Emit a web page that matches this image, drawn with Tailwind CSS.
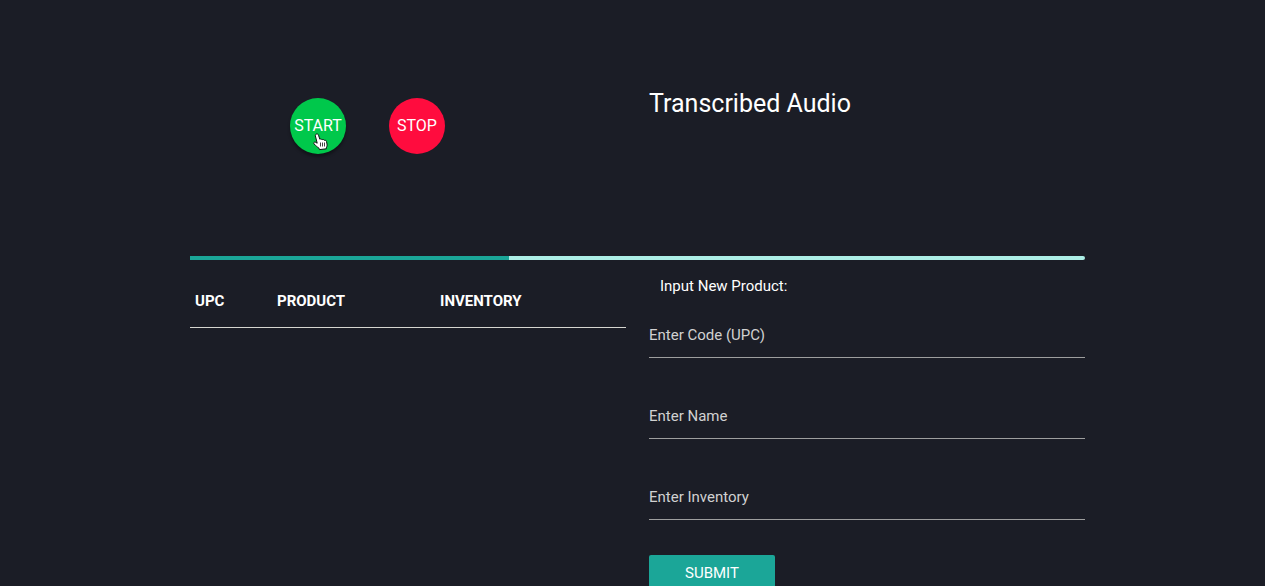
<!DOCTYPE html>
<html lang="en">
<head>
<meta charset="utf-8">
<meta name="viewport" content="width=device-width, initial-scale=1">
<title>Inventory</title>
<script src="https://cdn.jsdelivr.net/npm/@tailwindcss/browser@4"></script>
</head>
<body class="h-screen overflow-hidden bg-[#1b1d26] pr-[180px] pl-[190px] font-[Roboto,sans-serif] text-[15px] leading-6 text-white">
<main>
  <section class="grid h-64 grid-cols-2 gap-x-[23px]">
    <div class="flex items-start gap-[43px] pt-[98px] pl-[100px]">
      <button type="button" class="relative flex size-14 cursor-pointer items-center justify-center rounded-full bg-[#00c84b] text-base shadow-[0_3px_3px_rgba(0,0,0,0.35)]">START
        <svg class="absolute top-[35px] left-[23px]" width="15" height="18" viewBox="0 0 15 18" aria-hidden="true">
          <path d="M3.5 1C4.6.7 5.2 1.3 5.5 2.2L6.8 6.2C7.6 5.7 8.5 6 9 6.8C10 6.2 10.9 6.5 11.3 7.3C12.4 6.9 13.2 7.5 13.5 8.6L14 11C14.3 12.6 13.8 14 13.2 15L13.4 15.8L6.5 16.6L6 15.2C4.5 14.3 3 12.8 1 10.9C.2 10 1 8.9 2.2 9.1L4.2 10.2L2.4 3C2.2 2 2.7 1.2 3.5 1Z" fill="#fff" stroke="#111" stroke-width="1" stroke-linejoin="round"/>
          <path d="M7.5 9.5V13.5M9.5 9.5V13.5M11.5 9.5V13.5" fill="none" stroke="#111" stroke-width=".8"/>
        </svg>
      </button>
      <button type="button" class="flex size-14 cursor-pointer items-center justify-center rounded-full bg-[#ff0c3e] text-base">STOP</button>
    </div>
    <h1 class="pt-[89px] text-[25px] leading-[30px]">Transcribed Audio</h1>
  </section>
  <div role="progressbar" aria-label="Transcribing" class="h-1 overflow-hidden rounded-r-xs bg-[#aceee6]">
    <div class="h-full w-[319px] bg-[#1ba698]"></div>
  </div>
  <section class="grid grid-cols-2 items-start gap-x-[23px]">
    <table class="mt-3 w-full table-fixed border-collapse text-left">
      <thead>
        <tr class="border-b border-[#d6d6d0]">
          <th class="w-[82px] px-[5px] pt-[17px] pb-[14px] font-bold">UPC</th>
          <th class="w-[163px] px-[5px] pt-[17px] pb-[14px] font-bold">PRODUCT</th>
          <th class="px-[5px] pt-[17px] pb-[14px] font-bold">INVENTORY</th>
        </tr>
      </thead>
    </table>
    <form class="pt-[14px]">
      <h2 class="pl-[11px]">Input New Product:</h2>
      <div class="mt-[14px] flex flex-col gap-[35px]">
        <input type="text" aria-label="Enter Code (UPC)" placeholder="Enter Code (UPC)" class="h-[46px] w-full border-b border-[#9e9e9e] outline-none placeholder:text-[#d1d1d1]">
        <input type="text" aria-label="Enter Name" placeholder="Enter Name" class="h-[46px] w-full border-b border-[#9e9e9e] outline-none placeholder:text-[#d1d1d1]">
        <input type="text" aria-label="Enter Inventory" placeholder="Enter Inventory" class="h-[46px] w-full border-b border-[#9e9e9e] outline-none placeholder:text-[#d1d1d1]">
      </div>
      <button type="submit" class="mt-[35px] h-9 w-[126px] cursor-pointer rounded-xs bg-[#1ba698]">SUBMIT</button>
    </form>
  </section>
</main>
</body>
</html>
